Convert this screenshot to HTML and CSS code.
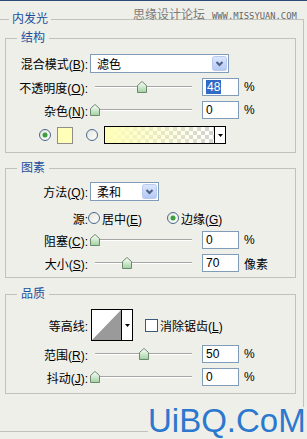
FILE: index.html
```html
<!DOCTYPE html>
<html lang="zh-CN">
<head>
    <meta charset="UTF-8">
    <meta name="viewport" content="width=device-width, initial-scale=1.0">
    <title>内发光</title>
    <link rel="stylesheet" href="styles.css">
</head>
<body>
    <svg class="defs" width="0" height="0" aria-hidden="true">
        <defs>
            <linearGradient id="thumbFill" x1="0" y1="0" x2="0" y2="1">
                <stop offset="0" stop-color="#ffffff"/>
                <stop offset="1" stop-color="#9fd29f"/>
            </linearGradient>
            <linearGradient id="radioFill" x1="0" y1="0" x2="1" y2="1">
                <stop offset="0" stop-color="#e4e3dc"/>
                <stop offset="1" stop-color="#ffffff"/>
            </linearGradient>
            <linearGradient id="dropFill" x1="0" y1="0" x2="0" y2="1">
                <stop offset="0" stop-color="#dce7fd"/>
                <stop offset="1" stop-color="#b3c8f4"/>
            </linearGradient>
        </defs>
        <symbol id="thumb" viewBox="0 0 10 12">
            <path d="M0.5 4.5 L5 0.5 L9.5 4.5 V11.5 H0.5 Z" fill="url(#thumbFill)" stroke="#6f876f"/>
        </symbol>
        <symbol id="radio" viewBox="0 0 12 12">
            <circle cx="6" cy="6" r="5.5" fill="url(#radioFill)" stroke="#48698a"/>
        </symbol>
        <symbol id="radio-on" viewBox="0 0 12 12">
            <circle cx="6" cy="6" r="5.5" fill="url(#radioFill)" stroke="#48698a"/>
            <circle cx="6" cy="6" r="2.5" fill="#3b9f3b"/>
        </symbol>
        <symbol id="drop" viewBox="0 0 15 15">
            <rect x="0.5" y="0.5" width="14" height="14" rx="2" fill="url(#dropFill)" stroke="#b8caf3"/>
            <path d="M4.5 6 L7.5 9 L10.5 6" fill="none" stroke="#4d6185" stroke-width="2"/>
        </symbol>
        <symbol id="tri" viewBox="0 0 5 3">
            <path d="M0 0 H5 L2.5 3 Z" fill="#000"/>
        </symbol>
    </svg>

    <div class="mark-top">思缘设计论坛<span class="site">WWW.MISSYUAN.COM</span></div>

    <fieldset class="panel">
        <legend>内发光</legend>

        <fieldset class="group g1">
            <legend>结构</legend>
            <div class="row tall">
                <span class="label">混合模式(<u>B</u>):</span>
                <div class="select blend">
                    <span class="value">滤色</span>
                    <svg class="drop"><use href="#drop"/></svg>
                </div>
            </div>
            <div class="row mt5">
                <span class="label">不透明度(<u>O</u>):</span>
                <div class="slider"><div class="track"><svg class="thumb" style="left: 48%"><use href="#thumb"/></svg></div></div>
                <div class="field"><span class="sel">48</span></div>
                <span class="unit">%</span>
            </div>
            <div class="row mt5">
                <span class="label">杂色(<u>N</u>):</span>
                <div class="slider"><div class="track"><svg class="thumb" style="left: 0%"><use href="#thumb"/></svg></div></div>
                <div class="field">0</div>
                <span class="unit">%</span>
            </div>
            <div class="row mt7">
                <svg class="radio first"><use href="#radio-on"/></svg>
                <span class="swatch"></span>
                <svg class="radio second"><use href="#radio"/></svg>
                <div class="gradient">
                    <span class="ramp"></span>
                    <span class="arrow"><svg class="tri"><use href="#tri"/></svg></span>
                </div>
            </div>
        </fieldset>

        <fieldset class="group g2">
            <legend>图素</legend>
            <div class="row tall">
                <span class="label">方法(<u>Q</u>):</span>
                <div class="select method">
                    <span class="value">柔和</span>
                    <svg class="drop"><use href="#drop"/></svg>
                </div>
            </div>
            <div class="row mt8">
                <span class="label">源:</span>
                <svg class="radio src"><use href="#radio"/></svg>
                <span class="opt">居中(<u>E</u>)</span>
                <svg class="radio src2"><use href="#radio-on"/></svg>
                <span class="opt">边缘(<u>G</u>)</span>
            </div>
            <div class="row mt4">
                <span class="label">阻塞(<u>C</u>):</span>
                <div class="slider"><div class="track"><svg class="thumb" style="left: 0%"><use href="#thumb"/></svg></div></div>
                <div class="field">0</div>
                <span class="unit">%</span>
            </div>
            <div class="row mt5">
                <span class="label">大小(<u>S</u>):</span>
                <div class="slider"><div class="track"><svg class="thumb" style="left: 33%"><use href="#thumb"/></svg></div></div>
                <div class="field">70</div>
                <span class="unit">像素</span>
            </div>
        </fieldset>

        <fieldset class="group g3">
            <legend>品质</legend>
            <div class="row contour-row">
                <span class="label">等高线:</span>
                <div class="contour">
                    <svg class="curve" viewBox="0 0 29 30"><polygon points="0,30 29,0 29,30" fill="#9a9a9a"/></svg>
                    <span class="arrow"><svg class="tri"><use href="#tri"/></svg></span>
                </div>
                <span class="check"></span>
                <span class="opt">消除锯齿(<u>L</u>)</span>
            </div>
            <div class="row mt4">
                <span class="label">范围(<u>R</u>):</span>
                <div class="slider"><div class="track"><svg class="thumb" style="left: 50%"><use href="#thumb"/></svg></div></div>
                <div class="field">50</div>
                <span class="unit">%</span>
            </div>
            <div class="row mt5">
                <span class="label">抖动(<u>J</u>):</span>
                <div class="slider"><div class="track"><svg class="thumb" style="left: 0%"><use href="#thumb"/></svg></div></div>
                <div class="field">0</div>
                <span class="unit">%</span>
            </div>
        </fieldset>
    </fieldset>

    <div class="mark-bottom">UiBQ.CoM</div>
</body>
</html>
```

FILE: styles.css
```css
html {
    background-color: #efefea;
}
body {
    margin: 0;
    border-top: 1px solid #2d4a78;
    height: 438px;
    overflow: hidden;
    position: relative;
    background-color: #efefea;
    color: #000;
    font-family: "Liberation Sans", "Noto Sans CJK SC", sans-serif;
    font-size: 12px;
}
.defs {
    position: absolute;
    width: 0;
    height: 0;
}
u {
    text-decoration-thickness: 1px;
    text-underline-offset: 1px;
}

.panel {
    margin: 11px 0 0;
    width: 304px;
    box-sizing: border-box;
    padding: 5px 7px 37px 5px;
    border: 1px solid #c2c2ba;
    border-left: none;
    min-width: 0;
}
legend {
    font-size: 12px;
    line-height: 14px;
    color: #1b4f9b;
    padding: 0 4px;
    margin-left: 11px;
}
.panel > legend {
    padding: 0 3px;
    margin-left: 4px;
}
.group {
    margin: 0;
    border: 1px solid #c2c2ba;
    min-width: 0;
}
.g1 {
    padding: 9px 0 8px;
}
.g2 {
    margin-top: 8px;
    padding: 7px 0 5px;
}
.g3 {
    margin-top: 9px;
    padding: 8px 0 7px;
}

.row {
    display: flex;
    align-items: center;
    height: 18px;
    white-space: nowrap;
}
.row.tall {
    height: 19px;
}
.mt4 { margin-top: 4px; }
.mt5 { margin-top: 5px; }
.mt7 { margin-top: 7px; }
.mt8 { margin-top: 8px; }
.label {
    width: 84px;
    box-sizing: border-box;
    padding-right: 2px;
    text-align: right;
    flex: none;
}

.select {
    display: flex;
    align-items: center;
    height: 19px;
    box-sizing: border-box;
    border: 1px solid #7f9db9;
    background-color: #fff;
    flex: none;
}
.blend {
    width: 139px;
}
.method {
    width: 69px;
}
.select .value {
    flex: 1;
    padding-left: 6px;
}
.drop {
    width: 15px;
    height: 15px;
    margin-right: 1px;
}

.slider {
    width: 108px;
    margin-right: 4px;
    flex: none;
}
.track {
    position: relative;
    height: 1px;
    margin: 0 6px 0 5px;
    border-top: 1px solid #a6a6a6;
    background-color: #fff;
}
.thumb {
    position: absolute;
    top: -6px;
    width: 10px;
    height: 12px;
    margin-left: -5px;
}
.field {
    width: 37px;
    height: 18px;
    box-sizing: border-box;
    border: 1px solid #7f9db9;
    background-color: #fff;
    padding-left: 3px;
    line-height: 16px;
    flex: none;
}
.sel {
    background-color: #316ac5;
    color: #fff;
    padding: 0 1px;
}
.unit {
    margin-left: 5px;
}

.radio {
    width: 12px;
    height: 12px;
    flex: none;
}
.radio.first {
    margin-left: 33px;
}
.radio.second {
    margin-left: 13px;
}
.radio.src {
    margin-left: -2px;
}
.radio.src2 {
    margin-left: 25px;
}
.opt {
    margin-left: 2px;
}
.swatch {
    width: 16px;
    height: 17px;
    box-sizing: border-box;
    margin-left: 6px;
    border: 1px solid #8d8d8d;
    background-color: #ffffb8;
}
.gradient {
    display: flex;
    width: 122px;
    height: 18px;
    box-sizing: border-box;
    margin-left: 6px;
    border: 1px solid #000;
}
.ramp {
    flex: 1;
    background:
        linear-gradient(to right, #ffffb8, rgba(255, 255, 184, 0)),
        repeating-conic-gradient(#d2d2d2 0 25%, #fff 0 50%) 0 0 / 8px 8px;
}
.arrow {
    width: 10px;
    border-left: 1px solid #000;
    background-color: #fff;
    display: flex;
    align-items: center;
    justify-content: center;
}
.tri {
    width: 5px;
    height: 3px;
}

.contour-row {
    height: 32px;
}
.contour {
    display: flex;
    width: 42px;
    height: 32px;
    box-sizing: border-box;
    margin-left: 1px;
    border: 1px solid #000;
    background-color: #fff;
}
.curve {
    width: 29px;
    height: 30px;
}
.contour .arrow {
    flex: 1;
}
.check {
    width: 13px;
    height: 13px;
    box-sizing: border-box;
    margin-left: 12px;
    border: 1px solid #3c5a7a;
    background-color: #fff;
}

.mark-top {
    position: absolute;
    left: 133px;
    top: 7px;
    line-height: 14px;
    color: #7b7b7b;
    white-space: nowrap;
}
.site {
    margin-left: 7px;
    font-family: "DejaVu Sans Mono", monospace;
    font-size: 8.8px;
    color: #666;
}
.mark-bottom {
    position: absolute;
    left: 148px;
    top: 406px;
    font-family: "Liberation Sans", sans-serif;
    font-size: 33px;
    line-height: 28px;
    color: #2b78cf;
    background-color: #efefea;
    white-space: nowrap;
}
```
